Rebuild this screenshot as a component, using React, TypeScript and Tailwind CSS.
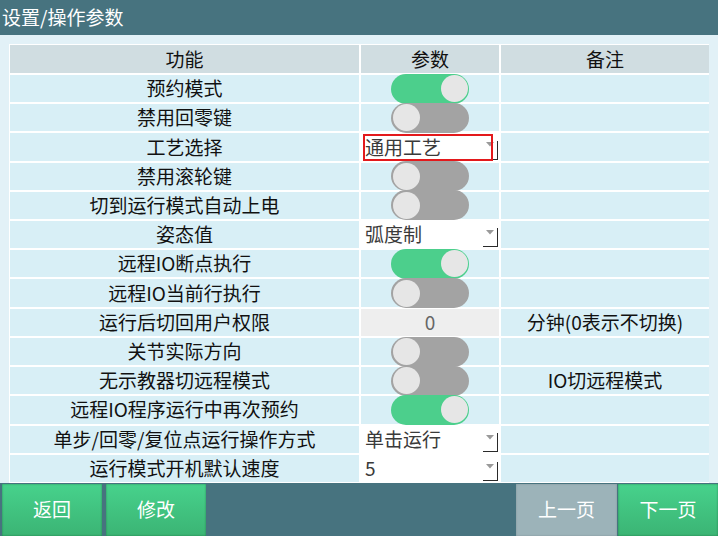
import React from "react";

type Param =
  | { kind: "toggle"; on: boolean }
  | { kind: "select"; value: string; red?: boolean }
  | { kind: "input"; value: string };

type Row = { label: string; param: Param; note?: string };

const rows: Row[] = [
  { label: "预约模式", param: { kind: "toggle", on: true } },
  { label: "禁用回零键", param: { kind: "toggle", on: false } },
  { label: "工艺选择", param: { kind: "select", value: "通用工艺", red: true } },
  { label: "禁用滚轮键", param: { kind: "toggle", on: false } },
  { label: "切到运行模式自动上电", param: { kind: "toggle", on: false } },
  { label: "姿态值", param: { kind: "select", value: "弧度制" } },
  { label: "远程IO断点执行", param: { kind: "toggle", on: true } },
  { label: "远程IO当前行执行", param: { kind: "toggle", on: false } },
  { label: "运行后切回用户权限", param: { kind: "input", value: "0" }, note: "分钟(0表示不切换)" },
  { label: "关节实际方向", param: { kind: "toggle", on: false } },
  { label: "无示教器切远程模式", param: { kind: "toggle", on: false }, note: "IO切远程模式" },
  { label: "远程IO程序运行中再次预约", param: { kind: "toggle", on: true } },
  { label: "单步/回零/复位点运行操作方式", param: { kind: "select", value: "单击运行" } },
  { label: "运行模式开机默认速度", param: { kind: "select", value: "5" } },
];

function Toggle({ on }: { on: boolean }) {
  return (
    <div className="absolute inset-0 flex items-center justify-center z-10">
      <div
        className={
          on
            ? "relative w-[78px] h-[30px] rounded-full bg-[#4ccf8c]"
            : "relative w-[78px] h-[30px] rounded-full bg-[#a3a3a3]"
        }
      >
        <div
          className={
            on
              ? "absolute top-[1.5px] right-[1.5px] w-[27px] h-[27px] rounded-full bg-[#e6e6e6]"
              : "absolute top-[1.5px] left-[1.5px] w-[27px] h-[27px] rounded-full bg-[#e6e6e6]"
          }
        />
      </div>
    </div>
  );
}

function Select({ value, red }: { value: string; red?: boolean }) {
  return (
    <div className="absolute inset-0 bg-white flex items-center pl-[4px] pb-[2px] text-[#3a3a3a]">
      <span className="leading-none">{value}</span>
      <svg className="absolute right-[5px] top-[9px]" width="8" height="5" viewBox="0 0 8 5">
        <polygon points="0,0 8,0 4,4.5" fill="#9a9a9a" />
      </svg>
      <div className="absolute right-[1px] bottom-[1px] w-[15px] h-[19px] border-r border-b border-[#2a2a2a]" />
      {red && (
        <div className="absolute left-[2px] top-[1px] bottom-0 w-[130px] border-2 border-[#e3191c]" />
      )}
    </div>
  );
}

function ParamCell({ p }: { p: Param }) {
  return (
    <div className="relative bg-[#d8eff6]">
      {p.kind === "toggle" && <Toggle on={p.on} />}
      {p.kind === "select" && <Select value={p.value} red={p.red} />}
      {p.kind === "input" && (
        <div className="absolute inset-0 bg-[#eeeeee] flex items-center justify-center pb-[2px] text-[#666666]">
          {p.value}
        </div>
      )}
    </div>
  );
}

function Btn({ label, gray }: { label: string; gray?: boolean }) {
  return (
    <div
      className={
        gray
          ? "w-[101px] h-full flex items-center justify-center pb-[2px] text-white bg-[#9cb3b9] shadow-[inset_0_0_2px_rgba(0,0,0,0.2)]"
          : "w-[100px] h-full flex items-center justify-center pb-[2px] text-white bg-gradient-to-b from-[#47d28c] to-[#3bb474] shadow-[inset_0_0_2px_rgba(0,60,30,0.5)]"
      }
    >
      {label}
    </div>
  );
}

export default function App() {
  return (
    <div
      className="w-[718px] h-[536px] flex flex-col text-[19px] text-[#111]"
      style={{ fontFamily: '"Noto Sans CJK SC", "Noto Sans", sans-serif' }}
    >
      <div className="h-[35px] bg-[#47737f] text-white flex items-center pl-[2px] pb-[1px] shrink-0">
        设置/操作参数
      </div>
      <div className="flex-1 bg-[#e2f1f7] pt-[9px] px-[9px]">
        <div className="h-[439px] bg-white p-[1px] grid grid-cols-[349px_138px_208px] grid-rows-[28px_repeat(14,1fr)] gap-[2px] leading-none">
          <div className="bg-[#d0dde1] flex items-center justify-center pb-[2px]">功能</div>
          <div className="bg-[#d0dde1] flex items-center justify-center pb-[2px]">参数</div>
          <div className="bg-[#d0dde1] flex items-center justify-center pb-[2px]">备注</div>
          {rows.map((r, i) => (
            <React.Fragment key={i}>
              <div className="bg-[#d8eff6] flex items-center justify-center pb-[2px] whitespace-nowrap">{r.label}</div>
              <ParamCell p={r.param} />
              <div className="bg-[#d8eff6] flex items-center justify-center pb-[2px] whitespace-nowrap">{r.note ?? ""}</div>
            </React.Fragment>
          ))}
        </div>
      </div>
      <div className="h-[53px] bg-[#47737f] shrink-0 flex pt-[1px] pl-[2px]">
        <Btn label="返回" />
        <div className="w-[4px]" />
        <Btn label="修改" />
        <div className="flex-1" />
        <Btn label="上一页" gray />
        <div className="w-[1px]" />
        <Btn label="下一页" />
      </div>
    </div>
  );
}
